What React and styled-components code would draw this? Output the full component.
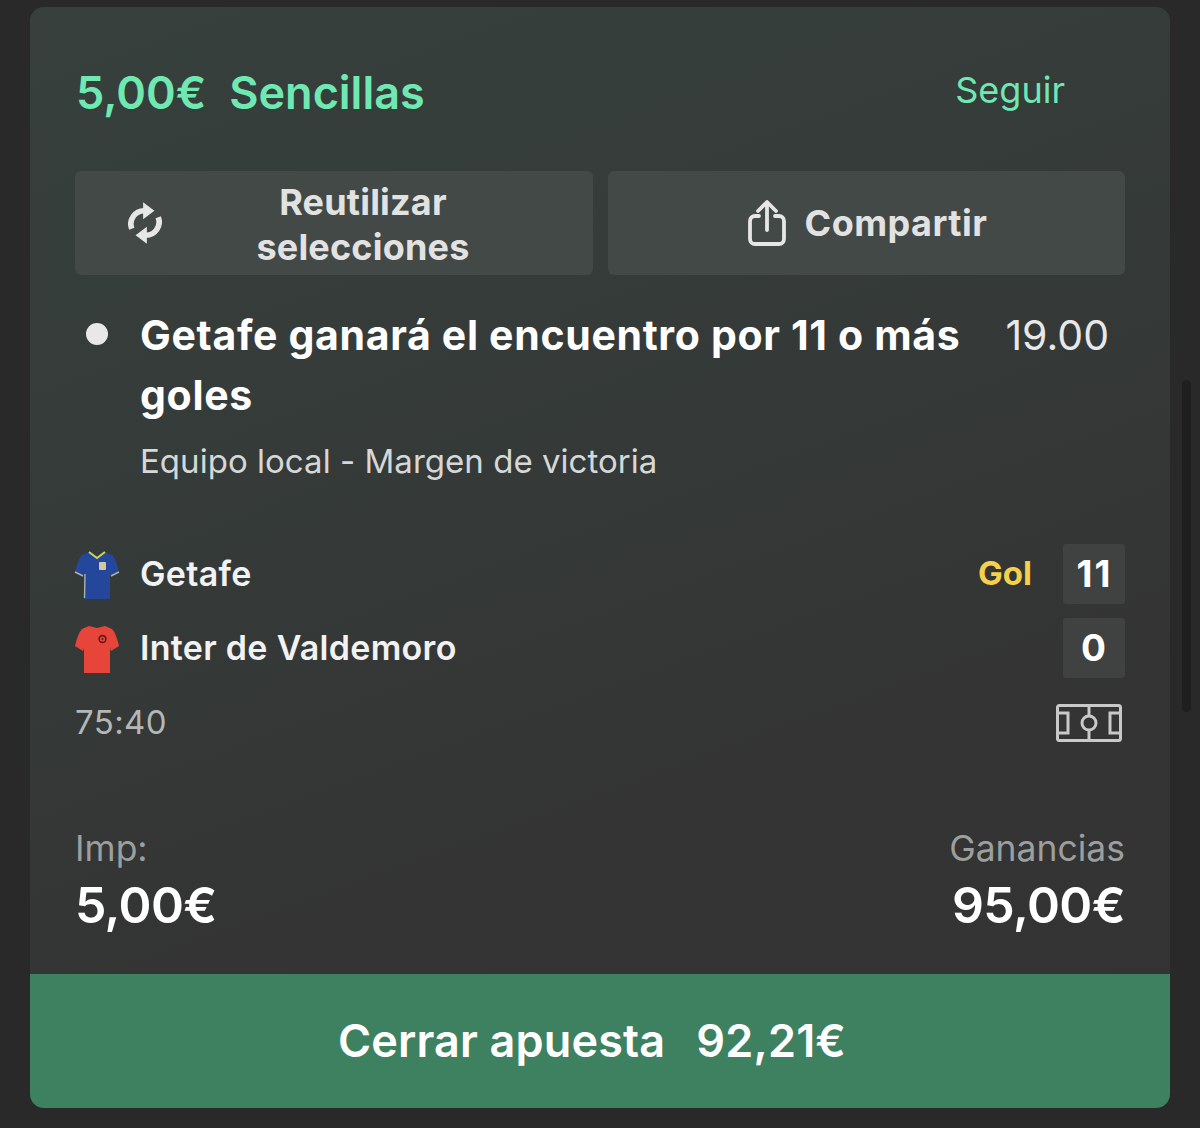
import styled, { createGlobalStyle } from 'styled-components';

const GlobalStyle = createGlobalStyle`
  html, body {
    margin: 0;
    padding: 0;
    background: #292929;
    font-family: Inter, "Liberation Sans", sans-serif;
  }
`;

const Page = styled.div`
  width: 1200px;
  height: 1128px;
  box-sizing: border-box;
  padding: 7px 30px 20px;
  overflow: hidden;
`;

const Card = styled.div`
  height: 1101px;
  border-radius: 14px;
  overflow: hidden;
  display: flex;
  flex-direction: column;
  background: linear-gradient(160deg, #36403c 0%, #353b39 35%, #333433 70%, #333333 100%);
`;

const Body = styled.div`
  flex: 1;
  padding: 0 45px;
`;

const Header = styled.div`
  height: 164px;
  display: flex;
  justify-content: space-between;
  align-items: center;
  padding-right: 60px;
  box-sizing: border-box;
`;

const Title = styled.div`
  display: flex;
  gap: 23px;
  margin: 6px 0 0 1px;
  font-size: 45px;
  font-weight: 600;
  color: #70e8b2;
`;

const Follow = styled.div`
  margin-top: 2px;
  font-size: 36px;
  color: #70e8b2;
`;

const Actions = styled.div`
  display: grid;
  grid-template-columns: 518px 517px;
  gap: 15px;
`;

const ActionButton = styled.div`
  height: 104px;
  border-radius: 6px;
  background: #424947;
  color: #e2e2e2;
  font-size: 36px;
  font-weight: 700;
  letter-spacing: ${(p) => (p.$wide ? '0.2px' : '0.5px')};
  line-height: 45px;
  display: flex;
  align-items: center;
  justify-content: ${(p) => (p.$wide ? 'flex-start' : 'center')};
  gap: 19px;
  padding-left: ${(p) => (p.$wide ? '53px' : '2px')};
  box-sizing: border-box;
`;

const ActionLabel = styled.div`
  width: 320px;
  text-align: center;
  margin: 3px 0 0 22px;
`;

const Selection = styled.div`
  display: grid;
  grid-template-columns: 66px 1fr auto;
  padding-top: 30px;
`;

const Dot = styled.div`
  width: 22px;
  height: 22px;
  border-radius: 50%;
  background: #e8e8e8;
  margin: 18px 0 0 11px;
`;

const SelectionText = styled.div`
  width: 840px;
  margin-left: -1px;
  font-size: 41px;
  line-height: 60px;
  font-weight: 700;
  letter-spacing: 0.67px;
  color: #fff;
`;

const Odds = styled.div`
  font-size: 41px;
  line-height: 60px;
  color: #e8e8e8;
  padding-right: 16px;
`;

const Market = styled.div`
  margin: 14px 0 0 65px;
  font-size: 33px;
  line-height: 44px;
  letter-spacing: 0.03px;
  color: #d6d8d7;
`;

const Teams = styled.div`
  margin-top: 61px;
  display: flex;
  flex-direction: column;
  gap: 14px;
`;

const TeamRow = styled.div`
  height: 60px;
  display: flex;
  align-items: center;
`;

const Shirt = styled.svg`
  width: 46px;
  height: 50px;
  flex: none;
  margin: 1px 20px 0 -1px;
`;

const TeamName = styled.div`
  flex: 1;
  padding-bottom: 2px;
  font-size: 34px;
  font-weight: 600;
  letter-spacing: 0.3px;
  color: #f2f2f2;
`;

const Goal = styled.div`
  padding-bottom: 2px;
  font-size: 33px;
  font-weight: 700;
  color: #f4d04b;
  margin-right: 31px;
`;

const Score = styled.div`
  width: 62px;
  height: 60px;
  border-radius: 3px;
  background: #404141;
  color: #fff;
  font-size: 37px;
  font-weight: 700;
  letter-spacing: 2px;
  padding: 0 0 2px 1px;
  box-sizing: border-box;
  display: flex;
  align-items: center;
  justify-content: center;
`;

const ClockRow = styled.div`
  margin-top: 14px;
  display: flex;
  justify-content: space-between;
  align-items: center;
  height: 60px;
`;

const Clock = styled.div`
  font-size: 33px;
  letter-spacing: 0.4px;
  color: #b5b6b6;
`;

const Stakes = styled.div`
  margin-top: 75px;
  display: flex;
  justify-content: space-between;
`;

const StakeBlock = styled.div`
  text-align: ${(p) => p.$align || 'left'};
`;

const StakeLabel = styled.div`
  font-size: 35.500px;
  line-height: 44px;
  color: #9d9f9e;
`;

const StakeValue = styled.div`
  margin-top: 4px;
  font-size: 50px;
  line-height: 60px;
  font-weight: 600;
  letter-spacing: -0.6px;
  color: #fff;
`;

const CashOut = styled.div`
  height: 134px;
  flex: none;
  background: #3e8160;
  color: #fff;
  font-size: 45px;
  font-weight: 600;
  letter-spacing: 0.15px;
  display: flex;
  align-items: center;
  justify-content: center;
  gap: 31px;
  padding-bottom: 2px;
  padding-right: 16px;
  box-sizing: border-box;
`;

const ScrollThumb = styled.div`
  position: absolute;
  left: 1182px;
  top: 380px;
  width: 9px;
  height: 332px;
  border-radius: 5px;
  background: #1f1f1f;
`;

const RefreshIcon = () => (
  <svg width="34" height="44" viewBox="0 0 36 46" fill="none" style={{ flex: 'none' }}>
    <path d="M4 29 A14 14 0 0 1 17 10" stroke="#e6e6e6" strokeWidth="6" />
    <path d="M16 1 L28 10 L16 19 Z" fill="#e6e6e6" />
    <path d="M32 17 A14 14 0 0 1 19 36" stroke="#e6e6e6" strokeWidth="6" />
    <path d="M20 27 L8 36 L20 45 Z" fill="#e6e6e6" />
  </svg>
);

const ShareIcon = () => (
  <svg width="38" height="46" viewBox="0 0 38 46" fill="none" stroke="#e6e6e6" strokeWidth="3.800" strokeLinecap="round" strokeLinejoin="round">
    <path d="M11 16 H7 A5 5 0 0 0 2 21 V39 A5 5 0 0 0 7 44 H31 A5 5 0 0 0 36 39 V21 A5 5 0 0 0 31 16 H27" />
    <path d="M19 30 V3 M10 11 L19 2 L28 11" />
  </svg>
);

const BlueShirt = () => (
  <Shirt viewBox="0 0 46 50">
    <path d="M15 2 L23 7 L31 2 L38 5 Q42 9 45 22 L37 26 L36 23 L36 49 L10 49 L10 23 L9 26 L1 22 Q4 9 8 5 Z" fill="#24479c" />
    <path d="M15 2 L23 8 L31 2" fill="none" stroke="#c9d65e" strokeWidth="2" />
    <path d="M11 24 L10.500 48 M1 22 L9 26 M45 22 L37 26" stroke="#aab2a8" strokeWidth="1.400" />
    <rect x="25" y="12" width="7" height="8" rx="1" fill="#cfc9a0" />
  </Shirt>
);

const RedShirt = () => (
  <Shirt viewBox="0 0 46 50">
    <path d="M15 2 L23 4 L31 2 L38 5 Q42 9 45 22 L37 27 L36 24 L36 49 L10 49 L10 24 L9 27 L1 22 Q4 9 8 5 Z" fill="#e8453a" />
    <circle cx="28.500" cy="15" r="3.400" fill="none" stroke="#5a1a18" strokeWidth="1.600" />
    <circle cx="28.500" cy="15" r="1" fill="#5a1a18" />
  </Shirt>
);

const PitchIcon = () => (
  <svg width="66" height="38" viewBox="0 0 66 38" fill="none" stroke="#c8c9c9" strokeWidth="3" style={{ marginRight: 3, marginTop: 2 }}>
    <rect x="1.500" y="1.500" width="63" height="35" rx="2" />
    <path d="M33 1.500 V12 M33 26 V36.500" />
    <circle cx="33" cy="19" r="7" />
    <path d="M1.500 9 H12 V29 H1.500 M64.500 9 H54 V29 H64.500" />
  </svg>
);

export default function App() {
  return (
    <Page>
      <GlobalStyle />
      <Card>
        <Body>
          <Header>
            <Title>
              <span>5,00€</span>
              <span>Sencillas</span>
            </Title>
            <Follow>Seguir</Follow>
          </Header>
          <Actions>
            <ActionButton $wide>
              <RefreshIcon />
              <ActionLabel>Reutilizar selecciones</ActionLabel>
            </ActionButton>
            <ActionButton>
              <ShareIcon />
              <span>Compartir</span>
            </ActionButton>
          </Actions>
          <Selection>
            <Dot />
            <SelectionText>Getafe ganará el encuentro por 11 o más goles</SelectionText>
            <Odds>19.00</Odds>
          </Selection>
          <Market>Equipo local - Margen de victoria</Market>
          <Teams>
            <TeamRow>
              <BlueShirt />
              <TeamName>Getafe</TeamName>
              <Goal>Gol</Goal>
              <Score>11</Score>
            </TeamRow>
            <TeamRow>
              <RedShirt />
              <TeamName>Inter de Valdemoro</TeamName>
              <Score>0</Score>
            </TeamRow>
          </Teams>
          <ClockRow>
            <Clock>75:40</Clock>
            <PitchIcon />
          </ClockRow>
          <Stakes>
            <StakeBlock>
              <StakeLabel>Imp:</StakeLabel>
              <StakeValue>5,00€</StakeValue>
            </StakeBlock>
            <StakeBlock $align="right">
              <StakeLabel>Ganancias</StakeLabel>
              <StakeValue>95,00€</StakeValue>
            </StakeBlock>
          </Stakes>
        </Body>
        <CashOut>
          <span>Cerrar apuesta</span>
          <span>92,21€</span>
        </CashOut>
      </Card>
      <ScrollThumb />
    </Page>
  );
}
